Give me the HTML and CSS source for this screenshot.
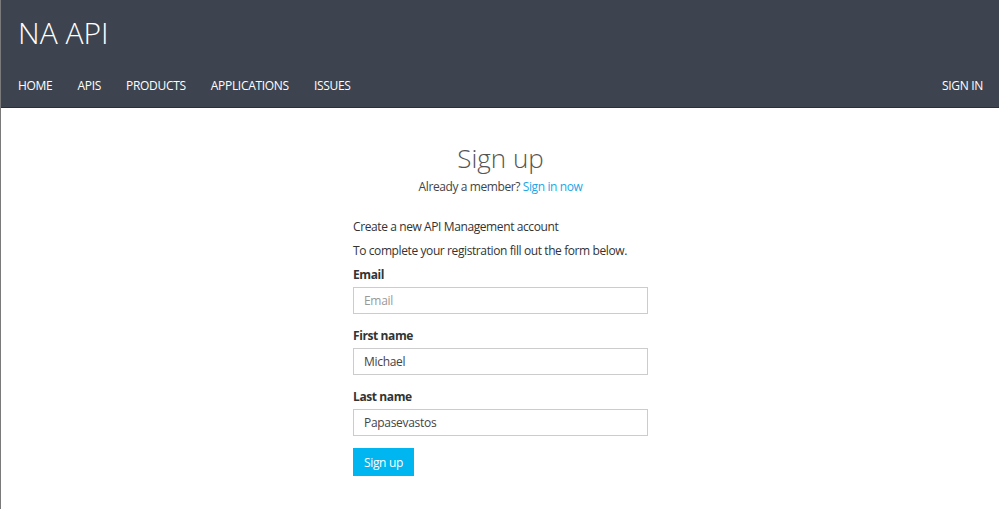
FILE: index.html
```html
<!DOCTYPE html>
<html lang="en">
<head>
  <meta charset="UTF-8">
  <title>NA API - Sign up</title>
  <link rel="stylesheet" href="styles.css">
</head>
<body>
  <header class="site-header">
    <div class="brand">NA API</div>
    <nav class="navbar">
      <ul class="nav-left">
        <li><a href="#">HOME</a></li>
        <li><a href="#">APIS</a></li>
        <li><a href="#">PRODUCTS</a></li>
        <li><a href="#">APPLICATIONS</a></li>
        <li><a href="#">ISSUES</a></li>
      </ul>
      <a class="nav-signin" href="#">SIGN IN</a>
    </nav>
  </header>

  <main class="page">
    <h1 class="page-title">Sign up</h1>
    <p class="member">Already a member? <a href="#">Sign in now</a></p>

    <form class="signup-form">
      <p class="intro">Create a new API Management account</p>
      <p class="intro">To complete your registration fill out the form below.</p>

      <div class="form-group">
        <label for="email">Email</label>
        <input type="text" id="email" placeholder="Email">
      </div>
      <div class="form-group">
        <label for="first">First name</label>
        <input type="text" id="first" value="Michael">
      </div>
      <div class="form-group">
        <label for="last">Last name</label>
        <input type="text" id="last" value="Papasevastos">
      </div>

      <button type="submit" class="btn-signup">Sign up</button>
    </form>
  </main>
</body>
</html>
```

FILE: styles.css
```css
* {
  margin: 0;
  padding: 0;
  box-sizing: border-box;
}

body {
  font-family: "Open Sans", "Noto Sans", sans-serif;
  font-size: 12px;
  letter-spacing: -0.4px;
  color: #333;
  background: #fff;
  border-left: 1px solid #7a7a7a;
  min-height: 100vh;
}

a {
  text-decoration: none;
}

/* header */
.site-header {
  background: #3d4450;
  border-bottom: 1px solid #2a3039;
  height: 108px;
  padding: 0 16px 0 17px;
  display: flex;
  flex-direction: column;
}

.brand {
  color: #fff;
  font-size: 30px;
  font-weight: 300;
  letter-spacing: 0;
  margin-top: 12px;
  height: 50px;
}

.navbar {
  display: flex;
  justify-content: space-between;
  align-items: center;
  margin-top: 15px;
}

.nav-left {
  list-style: none;
  display: flex;
  gap: 25px;
}

.navbar a {
  color: #fff;
  font-size: 12px;
  letter-spacing: -0.3px;
}

/* content */
.page {
  display: flex;
  flex-direction: column;
  align-items: center;
  padding-left: 1px;
}

.page-title {
  font-size: 26px;
  font-weight: 300;
  letter-spacing: 0;
  color: #555;
  margin-top: 32px;
  line-height: 36px;
}

.member {
  margin-top: 2px;
  color: #444;
}

.member a {
  color: #1aa7e8;
}

.signup-form {
  width: 295px;
  margin-top: 24px;
}

.intro {
  line-height: 16px;
  margin-bottom: 8px;
  color: #333;
}

.form-group label {
  display: block;
  font-weight: 700;
  line-height: 16px;
  margin-bottom: 4px;
  color: #333;
}

.form-group input {
  width: 100%;
  height: 27px;
  border: 1px solid #ccc;
  padding: 0 10px;
  font-family: inherit;
  font-size: 12px;
  letter-spacing: -0.3px;
  color: #444;
  margin-bottom: 14px;
}

.form-group input::placeholder {
  color: #999;
}

.btn-signup {
  background: #00b6f0;
  color: #fff;
  border: none;
  font-family: inherit;
  font-size: 12px;
  letter-spacing: -0.3px;
  width: 61px;
  height: 28px;
  margin-top: -2px;
}
```
